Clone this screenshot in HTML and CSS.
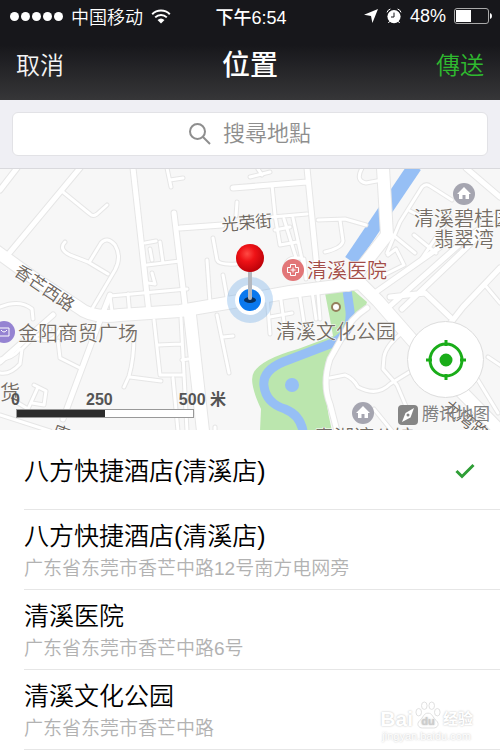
FILE: index.html
```html
<!DOCTYPE html>
<html lang="zh">

	<head>
		<meta charset="UTF-8">
		<meta name="viewport" content="width=device-width, initial-scale=1">
		<title>位置</title>
		<link rel="stylesheet" href="styles.css">
	</head>

	<body>
		<header class="top">
			<div class="status">
				<div class="status-left">
					<span class="signal"><i></i><i></i><i></i><i></i><i></i></span>
					<span>中国移动</span>
					<svg class="wifi" viewBox="0 0 20 15">
						<path d="M1.2 5.2a12.6 12.6 0 0 1 17.6 0M4.2 8.4a8.3 8.3 0 0 1 11.6 0" />
						<path class="fill" d="M6.5 11a5.2 5.2 0 0 1 7 0L10 14.6z" />
					</svg>
				</div>
				<div class="status-time">下午6:54</div>
				<div class="status-right">
					<svg class="arrow" viewBox="0 0 14 14"><path d="M14 0L8.4 14L7 7L0 5.8z" /></svg>
					<svg class="alarm" viewBox="0 0 16 16">
						<circle cx="8" cy="8.6" r="6.6" />
						<path class="ear" d="M1 4.4A5 5 0 0 1 4.4 1M15 4.4A5 5 0 0 0 11.6 1M3.6 13.4L2.4 15M12.4 13.4L13.6 15" />
						<path class="hand" d="M8 4.6V9H5" />
					</svg>
					<span>48%</span>
					<svg class="battery" viewBox="0 0 38 16">
						<rect class="case" x=".5" y=".5" width="34" height="15" rx="2.5" />
						<rect x="2" y="2" width="15" height="12" />
						<path d="M36 5q2 .6 2 3t-2 3z" />
					</svg>
				</div>
			</div>
			<div class="nav">
				<button type="button" class="nav-btn">取消</button>
				<h1>位置</h1>
				<button type="button" class="nav-btn send">傳送</button>
			</div>
		</header>

		<div class="search">
			<label class="search-box">
				<svg viewBox="0 0 22 22"><circle cx="8.5" cy="8.5" r="7.5" /><path d="M14 14l7 7" /></svg>
				<input type="text" placeholder="搜尋地點" aria-label="搜尋地點">
			</label>
		</div>

		<main>
			<div class="map">
				<svg class="map-canvas" viewBox="0 0 500 261" preserveAspectRatio="xMidYMid slice">
					<defs>
						<radialGradient id="ball" cx=".4" cy=".35" r=".7">
							<stop offset="0" stop-color="#ff4a44" />
							<stop offset=".4" stop-color="#ee1216" />
							<stop offset="1" stop-color="#b80008" />
						</radialGradient>
						<g id="roads">
							<!-- 小路 -->
							<g class="r4">
								<path d="M63 23L90 45Q93 48 97 45L107 36" />
								<path d="M167 -1L171 18M170 11L183 9M237 33L236 47" />
								<path d="M65 73Q58 80 70 86L88 93L108 105" />
								<path d="M90 92L101 74Q107 67 115 76Q122 88 115 101L92 140" />
								<path d="M147 96L180 92M160 73L163 94M145 74L156 72M150 80L152 91M152 104L155 115L148 114" />
								<path d="M213 69L217 91Q219 96 236 95M207 91L210 134M223 106L228 134" />
								<path d="M113 150L110 127L187 120M128 125L130 148" />
								<path d="M217 146L229 204M223 168L233 167" />
								<path d="M154 151L160 206L183 206M181 149L187 262M158 176L181 175M173 209L178 262M182 191L188 190" />
								<path d="M134 166Q134 190 129 207L124 218M130 208L161 212" />
								<path d="M58 172L60 189L80 199M0 138Q20 130 32 140L33 150M50 160L34 168L22 180L20 195Q10 206 0 204M20 180Q12 190 0 190M34 168Q52 178 60 160" />
								<path d="M34 216L46 222L44 236L32 234M38 218L28 240L18 234M0 246L50 262M215 262V258" />
								<path d="M272 16L275 46L280 76L297 73M272 48L307 45M293 49L303 95M284 50L298 95M275 61L290 58M286 96Q288 86 304 90L306 110" />
								<path d="M318 51L345 50L366 56M340 51L343 72Q342 79 325 83" />
								<path d="M362 -1Q355 12 366 14L382 11" />
								<path d="M387 84L400 53L422 18Q426 14 430 17L452 31M388 86L396 80L404 96L384 106" />
								<path d="M393 66L415 84M414 66L436 84M410 42L426 50M450 48L420 92" />
								<path d="M330 209L345 206Q353 209 358 218Q377 228 390 215L416 199M403 163Q386 176 384 188L383 200L397 216L408 242" />
								<path d="M267 125L270 165M280 124L285 160M300 128L305 160M312 122L316 150M318 125L320 150M270 148L292 144" />
								<path d="M250 8L270 3M258 0L262 6M470 198L498 244M488 188L500 196M374 240L392 262M484 115L500 134" />
							</g>
							<g class="r6">
								<path d="M17 -1L0 21M80 -1L6 88" />
								<path d="M133 -1L142 80L149 144" />
								<path d="M174 44L185 136M180 59L222 56" />
								<path d="M233 19L307 13M307 -1L318 110" />
								<path d="M110 126L97 159L63 250M0 193L53 146" />
								<path d="M367 139Q350 150 344 165L330 190Q322 215 330 235L337 262" />
								<path d="M466 -1L500 28M500 44L460 75L390 137M486 60L402 140M500 99L463 138L438 170M390 128L425 124L450 148M376 123L440 78" />
							</g>
							<!-- 主干道 -->
							<g class="r12">
								<path d="M-4 82L32 108L78 138Q92 150 120 146L180 142L233 133L290 123L360 114L378 132L420 180L455 216L500 262" />
								<path d="M383 -1L387 66L348 116" />
								<path d="M190 146L203 262" />
							</g>
						</g>
					</defs>

					<rect class="land" x="-500" width="1500" height="261" />
					<path class="park" d="M325 124L353 121L367 133L364 142L346 162L326 192Q321 215 332 262H260L261 240Q248 212 254 203Q262 190 298 180L333 167L330 150z" />
					<path class="river wide" d="M415 -3L351 92" />
					<path class="river" d="M347 121L350 142Q352 166 330 175L283 193Q262 202 264 217Q266 234 285 240Q300 246 303 262" />
					<circle class="lake" cx="292" cy="216" r="7" />
					<use class="edge" href="#roads" />
					<use href="#roads" />

					<g class="road-name">
						<text transform="translate(222 62) rotate(-5)">光荣街</text>
						<text transform="translate(13 105) rotate(34)">香芒西路</text>
						<text transform="translate(51 267) rotate(20)">唐</text>
						<text transform="translate(442 240) rotate(38)">龙湾路</text>
					</g>
					<g class="poi-name">
						<text x="414" y="57">清溪碧桂园</text>
						<text x="434" y="78">翡翠湾</text>
						<text x="18" y="172">金阳商贸广场</text>
						<text x="276" y="170">清溪文化公园</text>
						<text x="0" y="231">货</text>
						<text x="314" y="276">青湖湾公馆</text>
						<text class="hospital" x="307" y="109">清溪医院</text>
					</g>

					<g class="home">
						<circle cx="464" cy="25" r="11" />
						<path d="M464 18l-7 7h2v5h3.500v-4h3v4h3.500v-5h2z" />
						<circle cx="363" cy="244" r="11" />
						<path d="M363 237l-7 7h2v5h3.500v-4h3v4h3.500v-5h2z" />
					</g>
					<g class="clinic">
						<circle cx="293" cy="101" r="11" />
						<path d="M290.500 95.500h5v3h3v5h-3v3h-5v-3h-3v-5h3z" />
						<path d="M293 98.500v5M290.500 101h5" />
					</g>
					<g class="mall">
						<circle cx="4" cy="163" r="11" />
						<path d="M-1 159h10v8h-10zM1 161q3 4 6 0" />
					</g>
					<circle class="spot" cx="336" cy="138" r="4" />

					<circle class="halo" cx="250" cy="131" r="23" />
					<circle class="ring" cx="250" cy="131" r="15" />
					<circle class="dot" cx="250" cy="131" r="11" />
					<ellipse class="shade" cx="250" cy="131" rx="6" ry="3" />
					<rect class="stem" x="248" y="100" width="4" height="31" rx="2" />
					<circle cx="250" cy="89" r="14" fill="url(#ball)" />
				</svg>

				<div class="scale">
					<div class="scale-num"><span>0</span><span>250</span><span>500 米</span></div>
					<div class="scale-bar"></div>
				</div>
				<div class="brand">
					<svg viewBox="0 0 20 20"><rect width="20" height="20" rx="4" /><path d="M16 3L12.500 12.500L4 17L7.500 8z" /><circle cx="10" cy="10" r="1.500" /></svg>
					<span>腾讯地图</span>
				</div>
				<button type="button" class="locate" aria-label="定位">
					<svg viewBox="0 0 40 40"><circle class="o" cx="20" cy="20" r="16" /><circle cx="20" cy="20" r="5" /><path d="M20 0v6M20 34v6M0 20h6M34 20h6" /></svg>
				</button>
			</div>

			<ul class="places">
				<li class="chosen">
					<p class="name">八方快捷酒店(清溪店)</p>
					<svg class="tick" viewBox="0 0 20 16"><path d="M1.500 8L7 13.500L18.500 2" /></svg>
				</li>
				<li>
					<p class="name">八方快捷酒店(清溪店)</p>
					<p class="addr">广东省东莞市香芒中路12号南方电网旁</p>
				</li>
				<li>
					<p class="name">清溪医院</p>
					<p class="addr">广东省东莞市香芒中路6号</p>
				</li>
				<li>
					<p class="name">清溪文化公园</p>
					<p class="addr">广东省东莞市香芒中路</p>
				</li>
			</ul>
		</main>

		<div class="watermark">
			<div class="wm-logo">
				<span>Bai</span>
				<svg viewBox="0 0 28 30">
					<path d="M14 13c5 0 5 5 9 8 4 4 1 8-3 8H8c-4 0-7-4-3-8 4-3 4-8 9-8z" />
					<ellipse cx="4" cy="12" rx="3" ry="4" />
					<ellipse cx="10" cy="5" rx="3" ry="4" />
					<ellipse cx="18" cy="5" rx="3" ry="4" />
					<ellipse cx="24" cy="12" rx="3" ry="4" />
					<text x="14" y="26">du</text>
				</svg>
				<span class="wm-cn">经验</span>
			</div>
			<div class="wm-url">jingyan.baidu.com</div>
		</div>
	</body>

</html>
```
FILE: styles.css
```css
* {
	box-sizing: border-box;
}

body {
	position: relative;
	margin: 0;
	background: #fff;
	font-family: "Liberation Sans", "Noto Sans CJK SC", sans-serif;
	font-weight: 350;
}

button {
	border: 0;
	padding: 0;
	background: transparent;
	font-family: inherit;
	font-weight: inherit;
	cursor: pointer;
}

/* 顶部 */
.top {
	height: 100px;
	color: #fff;
	background: linear-gradient(#17171b 45%, #363638);
}

.status {
	display: grid;
	grid-template-columns: 1fr auto 1fr;
	align-items: center;
	height: 32px;
	padding: 0 8px 0 10px;
	font-size: 18px;
}

.status-left,
.status-right,
.signal {
	display: flex;
	align-items: center;
}

.status-left {
	gap: 8px;
}

.status-right {
	justify-content: flex-end;
	gap: 8px;
}

.status-time {
	font-weight: 500;
}

.signal {
	gap: 2px;
}

.signal i {
	width: 9px;
	height: 9px;
	border-radius: 50%;
	background: #fff;
}

.wifi {
	width: 20px;
	height: 15px;
	fill: none;
	stroke: #fff;
	stroke-width: 2;
}

.wifi .fill {
	fill: #fff;
	stroke: none;
}

.arrow {
	width: 14px;
	height: 14px;
	fill: #fff;
}

.alarm {
	width: 16px;
	height: 16px;
	fill: #fff;
}

.alarm .ear,
.alarm .hand {
	fill: none;
	stroke: #fff;
	stroke-width: 1;
}

.alarm .hand {
	stroke: #17171b;
}

.battery {
	width: 38px;
	height: 16px;
	fill: #fff;
}

.battery .case {
	fill: none;
	stroke: #aaa;
}

.nav {
	display: flex;
	justify-content: space-between;
	align-items: center;
	height: 68px;
	padding: 0 16px;
}

.nav h1 {
	margin: 0;
	font-size: 28px;
	font-weight: 500;
	line-height: 36px;
}

.nav-btn {
	color: #f4f4f4;
	font-size: 24px;
	line-height: 36px;
}

.send {
	color: #2fb92f;
	font-family: "Liberation Sans", "Noto Sans CJK TC", sans-serif;
}

/* 搜索 */
.search {
	padding: 12px;
	border-bottom: 1px solid #d9d9dd;
	background: #efeff4;
}

.search-box {
	display: flex;
	justify-content: center;
	align-items: center;
	gap: 12px;
	height: 44px;
	border: 1px solid #e2e2e6;
	border-radius: 6px;
	background: #fff;
}

.search-box svg {
	width: 22px;
	height: 22px;
	fill: none;
	stroke: #8e8e8e;
	stroke-width: 2;
}

.search-box input {
	width: 88px;
	border: 0;
	padding: 0;
	outline: 0;
	background: transparent;
	color: #333;
	font: 350 22px "Liberation Sans", "Noto Sans CJK TC", sans-serif;
}

.search-box input::placeholder {
	color: #8e8e8e;
}

/* 地图 */
.map {
	position: relative;
	height: 261px;
	overflow: hidden;
}

.map-canvas {
	display: block;
	width: 100%;
	height: 100%;
}

.land {
	fill: #f7f7f7;
}

.park {
	fill: #bbe6ae;
}

.river {
	fill: none;
	stroke: #96bff5;
	stroke-width: 9;
}

.river.wide {
	stroke-width: 14;
}

.lake {
	fill: #96bff5;
}

#roads {
	fill: none;
	stroke-linecap: round;
	stroke-linejoin: round;
}

/* 同一组道路画两遍，先描边再填白 */
use {
	--w: 0px;
	stroke: #fff;
}

use.edge {
	--w: 2px;
	stroke: #e6e6e6;
}

.r4 {
	stroke-width: calc(3px + var(--w));
}

.r6 {
	stroke-width: calc(5px + var(--w));
}

.r12 {
	stroke-width: calc(12px + var(--w));
}

.road-name,
.poi-name {
	fill: #6b645c;
	stroke: #fff;
	stroke-width: 1px;
	paint-order: stroke;
	font-size: 17px;
	font-weight: 350;
}

.poi-name {
	fill: #756e66;
	font-size: 20px;
}

.poi-name .hospital {
	fill: #a34d48;
}

.home circle {
	fill: #a5a5b0;
}

.home path {
	fill: #fff;
}

.clinic circle {
	fill: #e27678;
}

.clinic path,
.mall path {
	fill: none;
	stroke: #fff;
}

.mall circle {
	fill: #9583d2;
}

.spot {
	fill: #fff;
	stroke: #94805c;
	stroke-width: 2;
}

.halo {
	fill: #5aa0e6;
	fill-opacity: .3;
}

.ring {
	fill: #fff;
}

.dot {
	fill: #0a78ee;
}

.shade {
	fill: #08305e;
}

.stem {
	fill: #b4b8bf;
}

.scale {
	position: absolute;
	left: 16px;
	bottom: 12px;
	width: 178px;
}

.scale-num {
	display: flex;
	justify-content: space-between;
	margin: 0 -32px 0 -5px;
	color: #555;
	font-size: 16px;
	font-weight: 700;
	line-height: 18px;
}

.scale-bar {
	height: 9px;
	border: 1px solid #999;
	background: linear-gradient(90deg, #2c2c2c 50%, #fff 50%);
}

.brand {
	position: absolute;
	right: 10px;
	bottom: 4px;
	display: flex;
	align-items: center;
	gap: 4px;
	color: #808080;
	font-size: 17px;
	font-weight: 400;
	line-height: 22px;
}

.brand svg {
	width: 20px;
	height: 20px;
	fill: #858585;
}

.brand path {
	fill: #fff;
}

.locate {
	position: absolute;
	right: 16px;
	bottom: 32px;
	display: flex;
	justify-content: center;
	align-items: center;
	width: 77px;
	height: 77px;
	border: 1px solid #ddd;
	border-radius: 50%;
	background: #fff;
}

.locate svg {
	width: 40px;
	height: 40px;
	fill: #1aad19;
	stroke: #1aad19;
	stroke-width: 3;
}

.locate .o {
	fill: none;
}

/* 地点列表 */
.places {
	margin: 0;
	padding: 0 0 0 24px;
	list-style: none;
}

.places li {
	height: 80px;
	padding-top: 8px;
	border-bottom: 1px solid #e6e6e6;
}

.places p {
	margin: 0;
}

.places .chosen {
	display: flex;
	justify-content: space-between;
	align-items: center;
	padding: 2px 25px 0 0;
}

.name {
	color: #000;
	font-size: 25px;
	line-height: 36px;
}

.places .addr {
	color: #b2b2b2;
	font-size: 19px;
	line-height: 30px;
}

.tick {
	width: 20px;
	height: 16px;
	fill: none;
	stroke: #2f9e36;
	stroke-width: 3;
}

/* 水印 */
.watermark {
	position: absolute;
	right: 27px;
	bottom: 8px;
	color: #fff;
	text-shadow: 0 0 2px #bbb;
	text-align: center;
}

.wm-logo {
	display: flex;
	align-items: flex-end;
	gap: 2px;
	font-size: 21px;
	font-weight: 700;
	line-height: 22px;
}

.wm-logo svg {
	width: 26px;
	height: 30px;
	fill: #fff;
	stroke: #ddd;
}

.wm-logo text {
	fill: #ccc;
	stroke: none;
	font-size: 12px;
	text-anchor: middle;
}

.wm-cn {
	font-size: 15px;
}

.wm-url {
	font-size: 11px;
	line-height: 12px;
}
```
